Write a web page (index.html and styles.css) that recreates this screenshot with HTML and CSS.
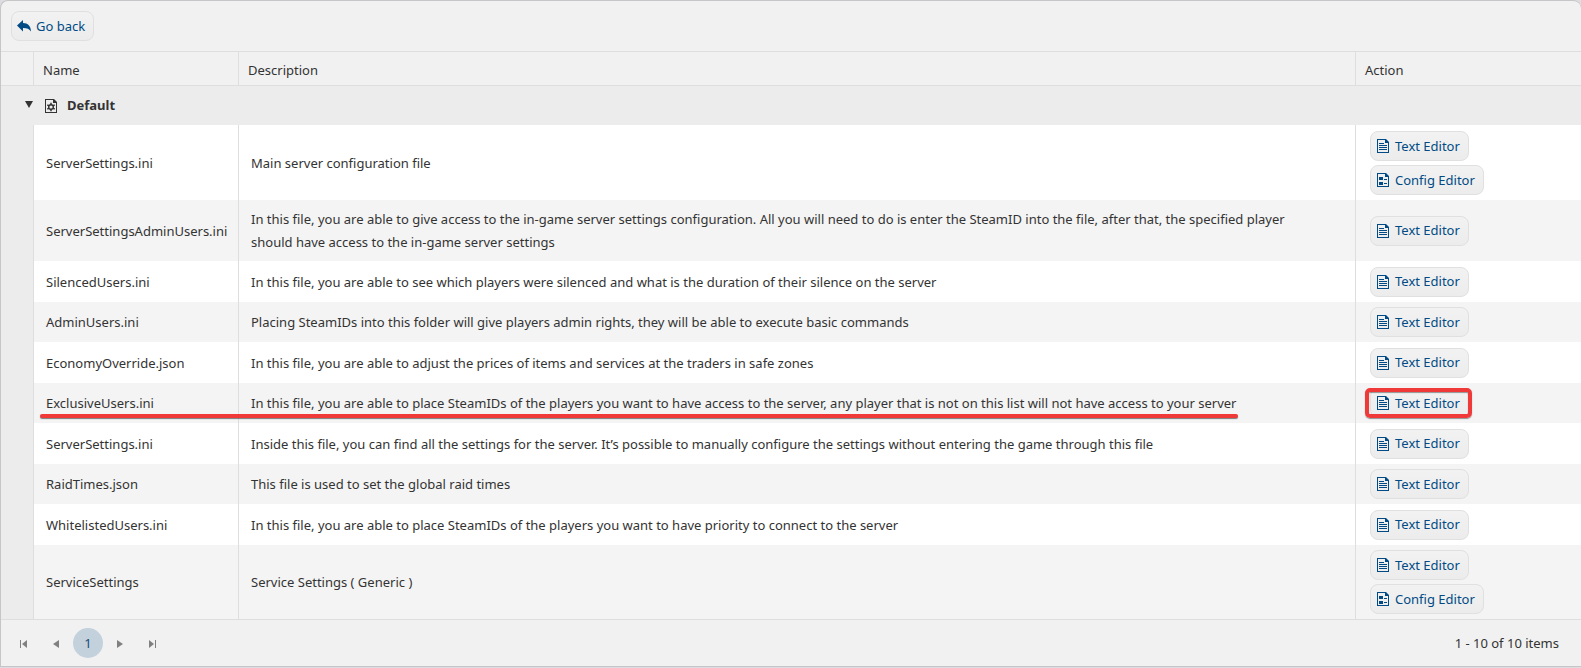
FILE: index.html
```html
<!DOCTYPE html>
<html lang="en">
  <head>
    <meta charset="UTF-8" />
    <meta name="viewport" content="width=device-width, initial-scale=1.0" />
    <title>Configuration Files</title>
    <link rel="stylesheet" href="styles.css">
  </head>
  <body>
    <!-- shared icons -->
    <svg class="sprite" aria-hidden="true">
      <symbol id="icon-text" viewBox="0 0 14 16">
        <path d="M1 1.5h8.5M1.5 1v14M1 14.5h11.5M12.5 15V4.5" fill="none" stroke="currentColor" />
        <path d="M9 1h1l3 3v1H9z" fill="currentColor" />
        <path d="M3 5.5h5M3 7.5h8M3 9.5h8M3 11.5h8" fill="none" stroke="currentColor" />
      </symbol>
      <symbol id="icon-config" viewBox="0 0 14 16">
        <path d="M1 1.5h8.5M1.5 1v14M1 14.5h11.5M12.5 15V4.5" fill="none" stroke="currentColor" />
        <path d="M9 1h1l3 3v1H9zM3 5h4v3H3zM3 10h4v3H3z" fill="currentColor" />
        <path d="M8 7.5h3M8 11.5h3" fill="none" stroke="currentColor" />
      </symbol>
    </svg>

    <div class="grid">
      <div class="toolbar">
        <button class="btn" type="button">
          <svg class="icon-back" viewBox="0 0 14 12" aria-hidden="true">
            <path d="M0 5.5L6 0v3c5 0 7.800 3 8 8.500C12.500 9 10 8 6 8v3.500z" fill="currentColor" />
          </svg>
          Go back
        </button>
      </div>

      <table class="files">
        <colgroup>
          <col class="col-toggle" />
          <col class="col-name" />
          <col />
          <col class="col-action" />
        </colgroup>
        <thead>
          <tr>
            <th></th>
            <th>Name</th>
            <th>Description</th>
            <th>Action</th>
          </tr>
        </thead>
        <tbody>
          <tr class="group">
            <td colspan="4">
              <div class="group-title">
                <button class="toggle" type="button" aria-label="Collapse group"></button>
                <svg class="icon" viewBox="0 0 14 16" aria-hidden="true">
                  <path d="M1 1.5h8.5M1.5 1v14M1 14.5h11.5M12.5 15V4.5" fill="none" stroke="currentColor" />
                  <path d="M9 1h1l3 3v1H9z" fill="currentColor" />
                  <circle cx="7" cy="9" r="2.3" fill="none" stroke="currentColor" stroke-width="1.4" />
                  <path d="M7 4.8v2M7 11.2v2M3.3 6.9l1.8 1M8.9 10.1l1.8 1M3.3 11.1l1.8-1M8.9 7.9l1.8-1" fill="none" stroke="currentColor" stroke-width="1.5" />
                </svg>
                <span>Default</span>
              </div>
            </td>
          </tr>
        </tbody>
        <tbody class="rows">
          <tr>
            <td></td>
            <td>ServerSettings.ini</td>
            <td>Main server configuration file</td>
            <td>
              <div class="actions">
                <button class="btn" type="button"><svg class="icon" aria-hidden="true"><use href="#icon-text" /></svg>Text Editor</button>
                <button class="btn" type="button"><svg class="icon" aria-hidden="true"><use href="#icon-config" /></svg>Config Editor</button>
              </div>
            </td>
          </tr>
          <tr>
            <td></td>
            <td>ServerSettingsAdminUsers.ini</td>
            <td>In this file, you are able to give access to the in-game server settings configuration. All you will need to do is enter the SteamID into the file, after that, the specified player should have access to the in-game server settings</td>
            <td>
              <div class="actions">
                <button class="btn" type="button"><svg class="icon" aria-hidden="true"><use href="#icon-text" /></svg>Text Editor</button>
              </div>
            </td>
          </tr>
          <tr>
            <td></td>
            <td>SilencedUsers.ini</td>
            <td>In this file, you are able to see which players were silenced and what is the duration of their silence on the server</td>
            <td>
              <div class="actions">
                <button class="btn" type="button"><svg class="icon" aria-hidden="true"><use href="#icon-text" /></svg>Text Editor</button>
              </div>
            </td>
          </tr>
          <tr>
            <td></td>
            <td>AdminUsers.ini</td>
            <td>Placing SteamIDs into this folder will give players admin rights, they will be able to execute basic commands</td>
            <td>
              <div class="actions">
                <button class="btn" type="button"><svg class="icon" aria-hidden="true"><use href="#icon-text" /></svg>Text Editor</button>
              </div>
            </td>
          </tr>
          <tr>
            <td></td>
            <td>EconomyOverride.json</td>
            <td>In this file, you are able to adjust the prices of items and services at the traders in safe zones</td>
            <td>
              <div class="actions">
                <button class="btn" type="button"><svg class="icon" aria-hidden="true"><use href="#icon-text" /></svg>Text Editor</button>
              </div>
            </td>
          </tr>
          <tr class="marked">
            <td></td>
            <td>ExclusiveUsers.ini</td>
            <td><span class="underlined">In this file, you are able to place SteamIDs of the players you want to have access to the server, any player that is not on this list will not have access to your server</span></td>
            <td>
              <div class="actions">
                <button class="btn" type="button"><svg class="icon" aria-hidden="true"><use href="#icon-text" /></svg>Text Editor</button>
              </div>
            </td>
          </tr>
          <tr>
            <td></td>
            <td>ServerSettings.ini</td>
            <td>Inside this file, you can find all the settings for the server. It’s possible to manually configure the settings without entering the game through this file</td>
            <td>
              <div class="actions">
                <button class="btn" type="button"><svg class="icon" aria-hidden="true"><use href="#icon-text" /></svg>Text Editor</button>
              </div>
            </td>
          </tr>
          <tr>
            <td></td>
            <td>RaidTimes.json</td>
            <td>This file is used to set the global raid times</td>
            <td>
              <div class="actions">
                <button class="btn" type="button"><svg class="icon" aria-hidden="true"><use href="#icon-text" /></svg>Text Editor</button>
              </div>
            </td>
          </tr>
          <tr>
            <td></td>
            <td>WhitelistedUsers.ini</td>
            <td>In this file, you are able to place SteamIDs of the players you want to have priority to connect to the server</td>
            <td>
              <div class="actions">
                <button class="btn" type="button"><svg class="icon" aria-hidden="true"><use href="#icon-text" /></svg>Text Editor</button>
              </div>
            </td>
          </tr>
          <tr>
            <td></td>
            <td>ServiceSettings</td>
            <td>Service Settings ( Generic )</td>
            <td>
              <div class="actions">
                <button class="btn" type="button"><svg class="icon" aria-hidden="true"><use href="#icon-text" /></svg>Text Editor</button>
                <button class="btn" type="button"><svg class="icon" aria-hidden="true"><use href="#icon-config" /></svg>Config Editor</button>
              </div>
            </td>
          </tr>
        </tbody>
      </table>

      <div class="pager">
        <div class="pages">
          <button class="page" type="button" aria-label="First page">
            <svg viewBox="0 0 8 8" aria-hidden="true"><path d="M0 0h1v8H0zM7 0v8L2 4z" /></svg>
          </button>
          <button class="page" type="button" aria-label="Previous page">
            <svg viewBox="0 0 8 8" aria-hidden="true"><path d="M7 0v8L1 4z" /></svg>
          </button>
          <button class="page current" type="button">1</button>
          <button class="page" type="button" aria-label="Next page">
            <svg viewBox="0 0 8 8" aria-hidden="true"><path d="M1 0v8l6-4z" /></svg>
          </button>
          <button class="page" type="button" aria-label="Last page">
            <svg viewBox="0 0 8 8" aria-hidden="true"><path d="M7 0h1v8H7zM1 0v8l5-4z" /></svg>
          </button>
        </div>
        <div>1 - 10 of 10 items</div>
      </div>
    </div>
  </body>
</html>
```
FILE: styles.css
```css
:root {
  --panel: #f1f1f1;
  --group: #ececec;
  --alt: #f4f4f4;
  --line: #dedede;
  --text: #333333;
  --link: #004b85;
  --mark: #f03a3a;
}
* {
  box-sizing: border-box;
}
body {
  margin: 0;
  background: #dcdde0;
  color: var(--text);
  font-family: "Segoe UI", "Noto Sans", sans-serif;
  font-size: 13px;
  line-height: 23px;
}
button {
  font: inherit;
  cursor: pointer;
}
.sprite {
  display: none;
}
.grid {
  border: 1px solid #c6c6c9;
  border-right: none;
  border-radius: 8px 8px 0 0;
  background: var(--panel);
  overflow: hidden;
}
.toolbar {
  padding: 10px;
}
.btn {
  display: inline-flex;
  align-items: center;
  height: 30px;
  padding: 0 8px 0 5px;
  border: 1px solid #e0e0e0;
  border-radius: 8px;
  background: linear-gradient(#f2f2f2, #ececec);
  color: var(--link);
  white-space: nowrap;
}
.btn:hover {
  background: #e4e4e4;
}
.icon {
  width: 14px;
  height: 16px;
  margin-right: 5px;
}
.icon-back {
  width: 14px;
  height: 12px;
  margin-right: 5px;
}

/* file table */
.files {
  width: 100%;
  table-layout: fixed;
  border-collapse: separate;
  border-spacing: 0;
}
.col-toggle {
  width: 32px;
}
.col-name {
  width: 205px;
}
.col-action {
  width: 226px;
}
th {
  height: 35px;
  padding: 3px 9px 0;
  border: solid var(--line);
  border-width: 1px 0 1px 1px;
  font-weight: normal;
  text-align: left;
}
th:first-child {
  border-left: none;
}
.group td {
  height: 39px;
  padding: 0;
  background: var(--group);
}
.group-title {
  display: flex;
  align-items: center;
  font-weight: bold;
}
.group-title .icon {
  margin-right: 9px;
}
.toggle {
  width: 8px;
  height: 7px;
  margin: 0 11px 2px 24px;
  padding: 0;
  border: none;
  background: var(--text);
  clip-path: polygon(0 0, 100% 0, 50% 100%);
}
.rows td {
  height: 41px;
  padding: 8px 12px 7px;
  border-left: 1px solid var(--line);
  background: #fff;
}
.rows td:nth-child(3) {
  padding-right: 32px;
}
.rows td:last-child {
  padding: 5px 14px;
}
.rows tr:first-child td:last-child {
  padding-top: 6px;
}
.rows tr:nth-child(even) td {
  height: 40px;
  background: var(--alt);
}
.rows tr td:first-child,
.rows tr:nth-child(even) td:first-child {
  border-left: none;
  background: var(--group);
}
.actions {
  display: flex;
  flex-direction: column;
  align-items: flex-start;
  gap: 4px;
}

/* marker strokes on the highlighted row */
.underlined {
  position: relative;
}
.underlined::after {
  content: "";
  position: absolute;
  left: -211px;
  right: -2px;
  bottom: -6px;
  height: 4px;
  border-radius: 2px;
  background: var(--mark);
  box-shadow: 0 1px 1px rgba(0, 0, 0, 0.5);
}
.marked .btn {
  position: relative;
}
.marked .btn::after {
  content: "";
  position: absolute;
  inset: -1px -4px -1px -6px;
  border: 4px solid var(--mark);
  border-radius: 5px;
  box-shadow: 0 1px 1px rgba(0, 0, 0, 0.4), inset 0 1px 1px rgba(0, 0, 0, 0.4);
}

/* pager */
.pager {
  display: flex;
  align-items: center;
  justify-content: space-between;
  padding: 8px 22px 8px 8px;
  border-top: 1px solid var(--line);
}
.pages {
  display: flex;
  gap: 2px;
}
.page {
  width: 30px;
  height: 30px;
  padding: 0;
  border: none;
  border-radius: 50%;
  background: none;
  color: #808080;
}
.page svg {
  width: 8px;
  height: 8px;
  fill: currentColor;
}
.page.current {
  background: #c3d1dd;
  color: #1d4a77;
}
```
